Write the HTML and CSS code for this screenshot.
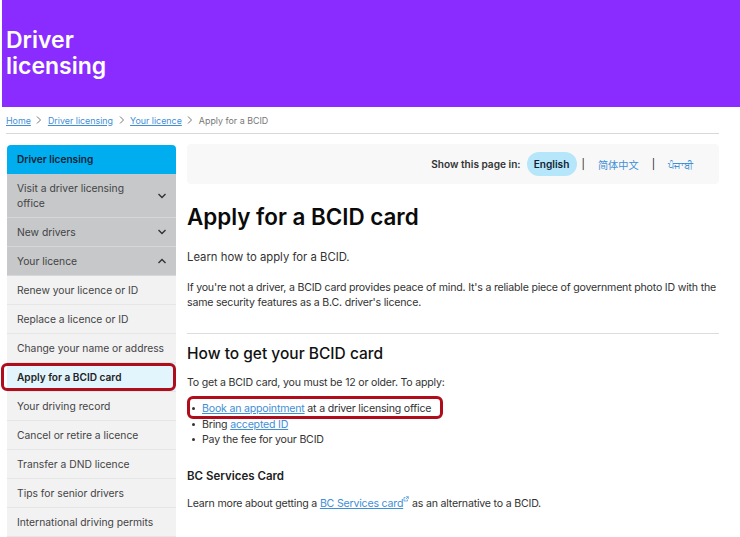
FILE: index.html
```html
<!DOCTYPE html>
<html lang="en">
<head>
    <meta charset="UTF-8">
    <meta name="viewport" content="width=device-width, initial-scale=1.0">
    <title>Apply for a BCID card</title>
    <link rel="stylesheet" href="styles.css">
</head>
<body>
    <header class="banner">
        <h2 class="banner-title">Driver<br>licensing</h2>
    </header>

    <nav class="breadcrumb">
        <a href="#">Home</a>
        <svg class="crumb-sep" viewBox="0 0 8 10"><path d="M2 1.5 L5.5 5 L2 8.5"/></svg>
        <a href="#">Driver licensing</a>
        <svg class="crumb-sep" viewBox="0 0 8 10"><path d="M2 1.5 L5.5 5 L2 8.5"/></svg>
        <a href="#">Your licence</a>
        <svg class="crumb-sep" viewBox="0 0 8 10"><path d="M2 1.5 L5.5 5 L2 8.5"/></svg>
        <span>Apply for a BCID</span>
    </nav>

    <div class="layout">
        <aside class="sidebar">
            <div class="side-head">Driver licensing</div>
            <div class="side-item group tall"><span>Visit a driver licensing office</span><svg class="chev" viewBox="0 0 10 6"><path d="M1.5 1 L5 4.5 L8.5 1"/></svg></div>
            <div class="side-item group"><span>New drivers</span><svg class="chev" viewBox="0 0 10 6"><path d="M1.5 1 L5 4.5 L8.5 1"/></svg></div>
            <div class="side-item group"><span>Your licence</span><svg class="chev" viewBox="0 0 10 6"><path d="M1.5 5 L5 1.5 L8.5 5"/></svg></div>
            <div class="side-item">Renew your licence or ID</div>
            <div class="side-item">Replace a licence or ID</div>
            <div class="side-item">Change your name or address</div>
            <div class="side-item current">Apply for a BCID card<div class="mark mark-side"></div></div>
            <div class="side-item">Your driving record</div>
            <div class="side-item">Cancel or retire a licence</div>
            <div class="side-item">Transfer a DND licence</div>
            <div class="side-item">Tips for senior drivers</div>
            <div class="side-item">International driving permits</div>
        </aside>

        <main class="content">
            <div class="lang-bar">
                <span class="lang-label">Show this page in:</span>
                <span class="lang-pill">English</span>
                <span class="lang-sep">|</span>
                <a class="lang-link" href="#" lang="zh">简体中文</a>
                <span class="lang-sep">|</span>
                <a class="lang-link" href="#" lang="pa">ਪੰਜਾਬੀ</a>
            </div>

            <h1>Apply for a BCID card</h1>
            <p class="lead">Learn how to apply for a BCID.</p>
            <p class="intro">If you're not a driver, a BCID card provides peace of mind. It's a reliable piece of government photo ID with the same security features as a B.C. driver's licence.</p>
            <hr>

            <h3>How to get your BCID card</h3>
            <p class="apply">To get a BCID card, you must be 12 or older. To apply:</p>
            <ul>
                <li><a href="#">Book an appointment</a> at a driver licensing office<div class="mark mark-list"></div></li>
                <li>Bring <a href="#">accepted ID</a></li>
                <li>Pay the fee for your BCID</li>
            </ul>

            <h4>BC Services Card</h4>
            <p class="more">Learn more about getting a <a href="#">BC Services card</a><svg class="ext" viewBox="0 0 6 6"><path d="M4.5 3.5 V5 H1 V1.5 H2.5 M3 0.7 H5.3 V3 M5.3 0.7 L2.8 3.2"/></svg> as an alternative to a BCID.</p>
        </main>
    </div>
</body>
</html>
```

FILE: styles.css
```css
* {
    box-sizing: border-box;
}

html, body {
    overflow: hidden;
}

body {
    margin: 0;
    height: 537px;
    font-family: Inter, 'Noto Sans', 'Noto Sans CJK SC', sans-serif;
    font-size: 10.6px;
    letter-spacing: -0.2px;
    color: #333;
    background: #fff;
}

a {
    color: #3f8fd6;
    text-decoration: underline;
}

.banner {
    height: 107px;
    margin-left: 1.5px;
    padding: 27px 4.5px 0;
    background-color: #8a2bff;
    letter-spacing: 0;
}

.banner-title {
    margin: 0;
    color: #fff;
    font-size: 23px;
    font-weight: 600;
    line-height: 26px;
}

.breadcrumb {
    display: flex;
    align-items: center;
    gap: 4.5px;
    height: 27px;
    margin: 0 21px 0 6px;
    font-size: 8.9px;
    letter-spacing: 0;
    color: #777;
    border-bottom: 1px solid #d8d8d8;
}

.crumb-sep {
    width: 8px;
    height: 10px;
}

.crumb-sep path {
    fill: none;
    stroke: #777;
    stroke-width: 1;
}

.layout {
    display: flex;
    gap: 11px;
    margin: 11px 21px 0 7px;
}

.sidebar {
    flex: 0 0 169px;
    font-size: 10.3px;
    letter-spacing: 0;
}

.side-head {
    height: 29px;
    padding: 0 10px 2px;
    display: flex;
    align-items: center;
    font-size: 10.1px;
    font-weight: 600;
    color: #123;
    background-color: #00aeef;
    border-radius: 4px 4px 0 0;
}

.side-item {
    position: relative;
    display: flex;
    align-items: center;
    justify-content: space-between;
    height: 29px;
    padding: 0 9px 0 10px;
    color: #444;
    background-color: #f2f2f3;
    border-bottom: 1px solid #e6e6e6;
}

.side-item.group {
    background-color: #c6c8ca;
    border-bottom-color: #d6d8da;
}

.side-item.tall {
    height: 44px;
    line-height: 15px;
}

.side-item.tall span {
    width: 125px;
}

.side-item.current {
    font-size: 10.1px;
    font-weight: 600;
    color: #222;
    background-color: #e2f5fd;
}

.chev {
    width: 10px;
    height: 6px;
    flex: none;
}

.chev path {
    fill: none;
    stroke: #333;
    stroke-width: 1.4;
}

.mark {
    position: absolute;
    border: 3px solid #b00d1c;
    border-radius: 6px;
}

.mark-side {
    left: -6px;
    right: 0;
    top: 0;
    bottom: 0;
}

.mark-list {
    left: -15px;
    top: -5px;
    width: 256px;
    height: 23px;
}

.content {
    flex: 1;
    min-width: 0;
}

.lang-bar {
    display: flex;
    align-items: center;
    justify-content: flex-end;
    height: 40px;
    margin-top: -1px;
    padding-right: 26px;
    font-size: 10.1px;
    letter-spacing: 0;
    background-color: #f8f8f8;
    border-radius: 4px;
}

.lang-label {
    font-weight: 600;
    color: #333;
}

.lang-pill {
    margin-left: 6px;
    width: 50px;
    height: 24px;
    line-height: 24px;
    text-align: center;
    font-weight: 600;
    color: #123;
    background-color: #b5e6fa;
    border-radius: 12px;
}

.lang-sep {
    margin: 0 13px 0 5px;
    color: #222;
}

.lang-link {
    text-decoration: none;
    font-size: 10.2px;
    font-family: 'Noto Sans CJK SC', 'Noto Sans', sans-serif;
}

.lang-link + .lang-sep {
    margin: 0 13px;
}

h1 {
    margin: 18px 0 0;
    font-size: 22.4px;
    line-height: 30px;
    font-weight: 600;
    letter-spacing: 0;
    color: #0a0a0a;
}

p {
    margin: 0;
    line-height: 15.5px;
}

.lead {
    margin-top: 18px;
    font-size: 11.3px;
    letter-spacing: 0;
}

.intro {
    margin-top: 14px;
}

hr {
    height: 1px;
    margin: 22px 0 0;
    border: 0;
    background-color: #ddd;
}

h3 {
    margin: 10px 0 0;
    font-size: 15.5px;
    line-height: 20px;
    font-weight: 500;
    letter-spacing: 0;
    color: #111;
}

.apply {
    margin-top: 11px;
}

ul {
    margin: 11px 0 0;
    padding-left: 15px;
    line-height: 15.5px;
    list-style: none;
}

li {
    position: relative;
}

li::before {
    content: "";
    position: absolute;
    left: -10px;
    top: 6px;
    width: 3px;
    height: 3px;
    border-radius: 50%;
    background-color: #333;
}

h4 {
    margin: 21px 0 0;
    font-size: 11.5px;
    line-height: 15px;
    font-weight: 600;
    letter-spacing: 0;
    color: #222;
}

.more {
    margin-top: 12px;
}

.ext {
    width: 6px;
    height: 6px;
    vertical-align: 5px;
}

.ext path {
    fill: none;
    stroke: #3f8fd6;
    stroke-width: 0.7;
}
```
